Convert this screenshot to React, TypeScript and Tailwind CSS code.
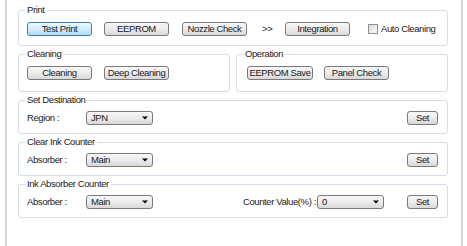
import type { ReactNode } from 'react';

const font = "font-['Liberation_Sans',Arial,sans-serif] text-[9.5px] tracking-[-0.4px] leading-[12px] text-[#1a1a1a] whitespace-nowrap";

const btnBase =
  'h-[14px] flex items-center justify-center rounded-[3px] border bg-linear-to-b whitespace-nowrap';
const btnGray = 'border-[#7a7a7a] from-[#f7f7f7] via-[#ececec] to-[#d8d8d8]';
const btnFocus = 'border-[#3c7fb1] from-[#eef8fe] via-[#d3ecfb] to-[#addbf6]';

function Btn({ label, w, focus = false, className = '' }: { label: string; w: string; focus?: boolean; className?: string }) {
  return (
    <button className={`${btnBase} ${focus ? btnFocus : btnGray} ${w} ${className}`}>
      {label}
    </button>
  );
}

function Combo({ value, className = '' }: { value: string; className?: string }) {
  return (
    <div
      className={`h-[14px] w-[67px] flex items-center justify-between pl-[4px] pr-[4px] rounded-[3px] border border-[#7a7a7a] bg-linear-to-b from-[#f7f7f7] via-[#ececec] to-[#d8d8d8] ${className}`}
    >
      <span>{value}</span>
      <svg width="6" height="4" viewBox="0 0 6 4">
        <path d="M0 0.5 H6 L3 3.5 Z" fill="#000" />
      </svg>
    </div>
  );
}

// group box: padding goes on the inner div so the legend stays put
function Group({ title, className = '', inner, children }: { title: string; className?: string; inner: string; children: ReactNode }) {
  return (
    <fieldset className={`border border-[#d5dee6] rounded-[3px] ${className}`}>
      <legend className="ml-[6px] px-[2px] leading-[12px]">{title}</legend>
      <div className={`flex items-center ${inner}`}>{children}</div>
    </fieldset>
  );
}

export default function App() {
  return (
    <div className={`w-[467px] h-[246px] bg-white pl-[5px] pr-[4px] flex ${font}`}>
      <div className="flex-1 h-full border-l-2 border-r-2 border-[#d6d6d6] pl-[11px] pr-[13px] pt-[4px]">
        {/* Print */}
        <Group title="Print" inner="pl-[8px] pt-[6px] pb-[9px]">
          <Btn label="Test Print" w="w-[65px]" focus />
          <Btn label="EEPROM" w="w-[65px]" className="ml-[12px]" />
          <Btn label="Nozzle Check" w="w-[65px]" className="ml-[13px]" />
          <span className="ml-[15px] w-[10px]">&gt;&gt;</span>
          <Btn label="Integration" w="w-[65px]" className="ml-[13px]" />
          <span className="ml-[18px] w-[10px] h-[10px] border border-[#8e8f8f] bg-linear-to-br from-[#dcdcdc] to-[#f8f8f8]" />
          <span className="ml-[3px]">Auto Cleaning</span>
        </Group>

        {/* Cleaning / Operation */}
        <div className="flex gap-[6px] mt-[2px]">
          <Group title="Cleaning" className="w-[212px]" inner="pl-[8px] pt-[6px] pb-[11px]">
            <Btn label="Cleaning" w="w-[65px]" />
            <Btn label="Deep Cleaning" w="w-[65px]" className="ml-[12px]" />
          </Group>
          <Group title="Operation" className="flex-1" inner="pl-[10px] pt-[6px] pb-[11px]">
            <Btn label="EEPROM Save" w="w-[66px]" />
            <Btn label="Panel Check" w="w-[65px]" className="ml-[11px]" />
          </Group>
        </div>

        {/* Set Destination */}
        <Group title="Set Destination" className="mt-[2px]" inner="pl-[8px] pr-[9px] pt-[5px] pb-[8px]">
          <span className="w-[59px]">Region :</span>
          <Combo value="JPN" />
          <Btn label="Set" w="w-[31px]" className="ml-auto" />
        </Group>

        {/* Clear Ink Counter */}
        <Group title="Clear Ink Counter" className="mt-[2px]" inner="pl-[8px] pr-[9px] pt-[5px] pb-[8px]">
          <span className="w-[59px]">Absorber :</span>
          <Combo value="Main" />
          <Btn label="Set" w="w-[31px]" className="ml-auto" />
        </Group>

        {/* Ink Absorber Counter */}
        <Group title="Ink Absorber Counter" className="mt-[2px]" inner="pl-[8px] pr-[9px] pt-[5px] pb-[8px]">
          <span className="w-[59px]">Absorber :</span>
          <Combo value="Main" />
          <span className="ml-[90px] w-[74px]">Counter Value(%) :</span>
          <Combo value="0" />
          <Btn label="Set" w="w-[31px]" className="ml-auto" />
        </Group>
      </div>
    </div>
  );
}
